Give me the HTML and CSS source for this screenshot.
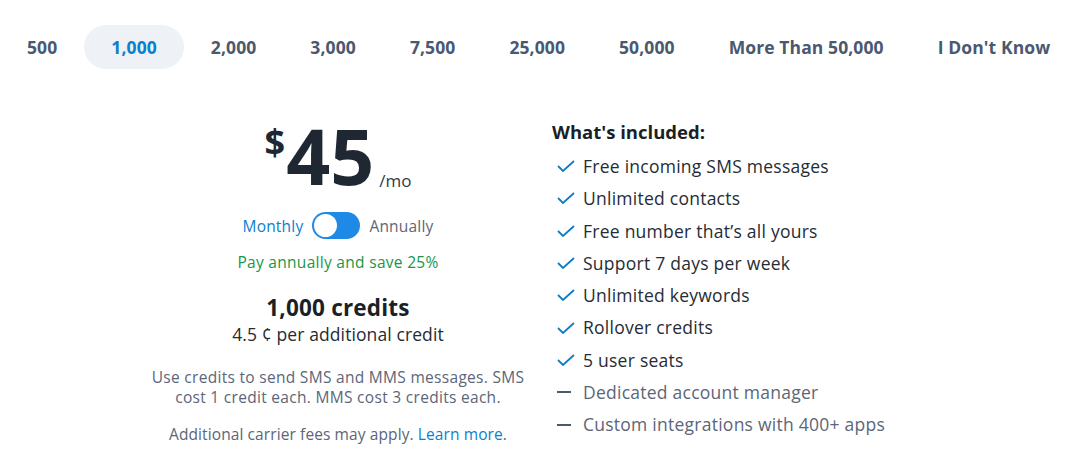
FILE: index.html
```html
<!DOCTYPE html>
<html lang="en">
<head>
  <meta charset="UTF-8">
  <title>Pricing</title>
  <link rel="stylesheet" href="styles.css">
</head>
<body>

  <div class="tabs">
    <span class="tab">500</span>
    <span class="tab active">1,000</span>
    <span class="tab">2,000</span>
    <span class="tab">3,000</span>
    <span class="tab">7,500</span>
    <span class="tab">25,000</span>
    <span class="tab">50,000</span>
    <span class="tab">More Than 50,000</span>
    <span class="tab">I Don't Know</span>
  </div>

  <div class="plan">
    <div class="summary">
      <div class="price">
        <span class="currency">$</span><span class="amount">45</span><span class="period">/mo</span>
      </div>
      <div class="billing">
        <span class="bill-label on">Monthly</span>
        <span class="switch"><span class="knob"></span></span>
        <span class="bill-label">Annually</span>
      </div>
      <p class="save">Pay annually and save 25%</p>
      <p class="credits">1,000 credits</p>
      <p class="extra">4.5 ¢ per additional credit</p>
      <p class="note">Use credits to send SMS and MMS messages. SMS cost 1 credit each. MMS cost 3 credits each.</p>
      <p class="note fees">Additional carrier fees may apply. <a href="#">Learn more</a>.</p>
    </div>

    <div class="features">
      <h3>What's included:</h3>
      <ul>
        <li class="yes"><svg class="ico" viewBox="0 0 18 12"><path d="M1 6 L6 11 L17 1"/></svg>Free incoming SMS messages</li>
        <li class="yes"><svg class="ico" viewBox="0 0 18 12"><path d="M1 6 L6 11 L17 1"/></svg>Unlimited contacts</li>
        <li class="yes"><svg class="ico" viewBox="0 0 18 12"><path d="M1 6 L6 11 L17 1"/></svg>Free number that’s all yours</li>
        <li class="yes"><svg class="ico" viewBox="0 0 18 12"><path d="M1 6 L6 11 L17 1"/></svg>Support 7 days per week</li>
        <li class="yes"><svg class="ico" viewBox="0 0 18 12"><path d="M1 6 L6 11 L17 1"/></svg>Unlimited keywords</li>
        <li class="yes"><svg class="ico" viewBox="0 0 18 12"><path d="M1 6 L6 11 L17 1"/></svg>Rollover credits</li>
        <li class="yes"><svg class="ico" viewBox="0 0 18 12"><path d="M1 6 L6 11 L17 1"/></svg>5 user seats</li>
        <li class="no"><svg class="ico" viewBox="0 0 18 12"><path d="M0 6 H14"/></svg>Dedicated account manager</li>
        <li class="no"><svg class="ico" viewBox="0 0 18 12"><path d="M0 6 H14"/></svg>Custom integrations with 400+ apps</li>
      </ul>
    </div>
  </div>

</body>
</html>
```

FILE: styles.css
```css
body { margin: 0; font-family: "Open Sans", "Noto Sans", sans-serif; color: #1f2733; background: #fff; }
p { margin: 0; }

.tabs { display: flex; align-items: center; padding: 25px 0 0 0; white-space: nowrap; }
.tab { flex: none; padding: 0 27px; height: 44px; line-height: 44px; border-radius: 22px; font-size: 17.5px; font-weight: 700; letter-spacing: 0.1px; color: #4a5870; }
.tab.active { background: #eef2f6; color: #0a7fd0; }

.plan { display: flex; padding: 50px 0 0 138px; }
.summary { width: 400px; text-align: center; }

.price { display: flex; justify-content: center; align-items: flex-start; height: 78px; }
.currency { font-size: 36px; font-weight: 700; line-height: 40px; margin-top: 3px; }
.amount { font-size: 77px; font-weight: 700; line-height: 74px; margin: 0 5px 0 1px; }
.period { font-size: 17px; color: #333a45; align-self: flex-end; margin-bottom: 5px; }

.billing { display: flex; justify-content: center; align-items: center; gap: 9px; margin-top: 15px; font-size: 15.5px; letter-spacing: 0.2px; color: #5b6678; }
.bill-label.on { color: #0a7fd0; }
.switch { display: block; width: 48px; height: 27px; border-radius: 14px; background: #1e8ae6; position: relative; }
.knob { position: absolute; left: 2px; top: 2px; width: 23px; height: 23px; border-radius: 50%; background: #fff; }

.save { margin-top: 12px; font-size: 15.5px; letter-spacing: 0.3px; color: #16974a; }
.credits { margin-top: 19px; font-size: 22.5px; font-weight: 700; letter-spacing: 0.2px; color: #1b1f26; }
.extra { margin-top: -1px; font-size: 17.5px; letter-spacing: 0.1px; color: #262b33; }
.note { margin: 21px auto 0; width: 390px; font-size: 15.5px; line-height: 20px; letter-spacing: 0.3px; color: #5b6678; }
.note.fees { margin-top: 17px; letter-spacing: 0.1px; }
.note a { color: #0a7fd0; text-decoration: none; }

.features { margin-left: 14px; }
.features h3 { margin: 0 0 6px; font-size: 18.5px; font-weight: 700; color: #1b1f26; }
.features ul { list-style: none; margin: 0; padding: 0; }
.features li { display: flex; align-items: center; font-size: 17.5px; line-height: 32.3px; letter-spacing: 0.25px; color: #262c36; }
.features li.no { color: #5b6678; }
.ico { flex: none; width: 18px; height: 12px; margin: 0 8px 0 5px; fill: none; stroke-width: 1.8; }
.yes .ico { stroke: #0d7cc7; }
.no .ico { stroke: #4a5870; stroke-width: 2; }
```
